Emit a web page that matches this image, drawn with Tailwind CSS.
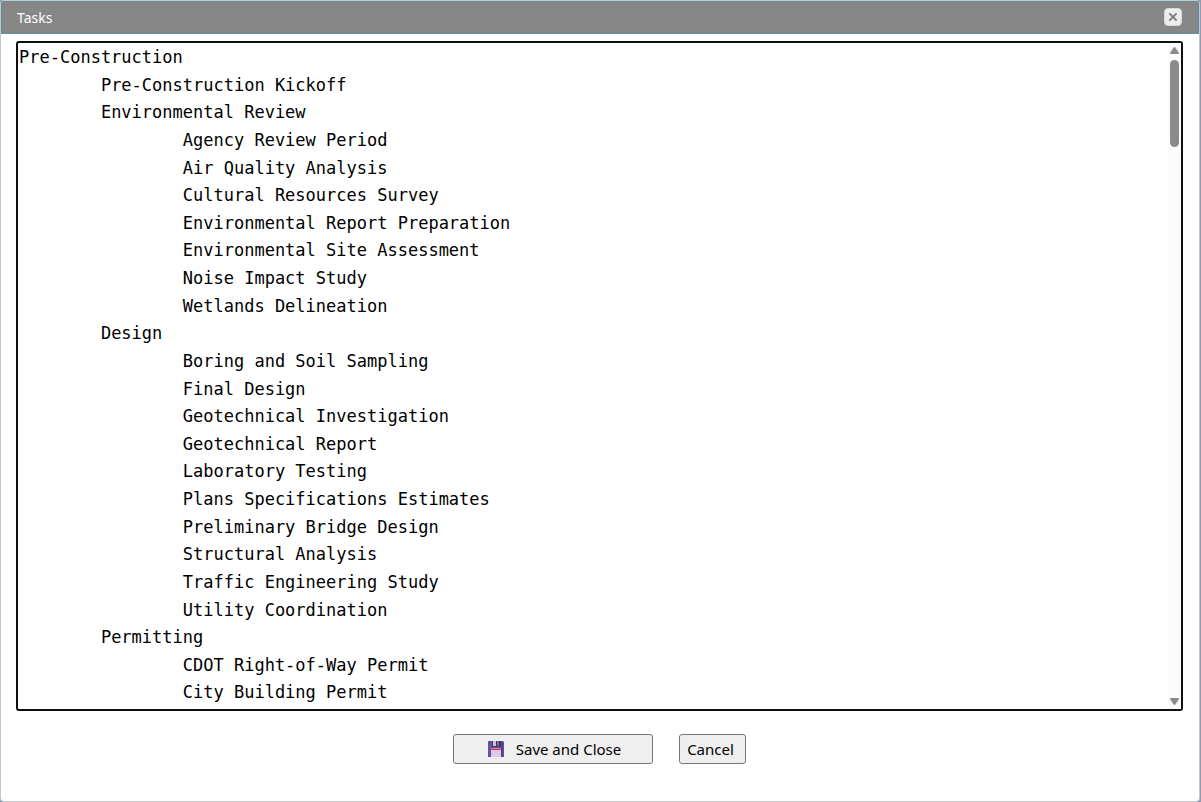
<!DOCTYPE html>
<html lang="en">
<head>
<meta charset="utf-8">
<title>Tasks</title>
<script src="https://cdn.jsdelivr.net/npm/@tailwindcss/browser@4"></script>
</head>
<body class="h-screen overflow-hidden bg-[#8f9bb5] pr-px font-['Noto_Sans','Open_Sans',sans-serif]">
<div role="dialog" aria-labelledby="title" class="flex h-full flex-col overflow-hidden rounded-[4px] border border-[#c8c8c8] bg-white">
  <header class="flex h-[33px] shrink-0 items-center justify-between border border-[#5b8f9c] bg-[#878787] pr-[16px] pb-px pl-[15px]">
    <h1 id="title" class="text-[14px] text-white">Tasks</h1>
    <button type="button" aria-label="Close" class="flex size-[18px] items-center justify-center rounded-[4px] border border-[#d8d8d8] bg-[#ededed]">
      <svg class="size-[10px]" viewBox="0 0 10 10" fill="none" stroke="#7d7d7d" stroke-width="2"><path d="M1.4 1.4 8.6 8.6M8.6 1.4 1.4 8.6"/></svg>
    </button>
  </header>
  <main class="relative mx-[15px] mt-[7px] mr-[16px] min-h-0 flex-1">
    <textarea aria-labelledby="title" spellcheck="false" wrap="off" class="block size-full resize-none overflow-hidden rounded-[3px] border-2 border-[#101010] bg-white px-px pt-px pb-0 font-['DejaVu_Sans_Mono','Liberation_Mono',monospace] text-[17px] leading-[1.625] text-black outline-none [tab-size:8]">
Pre-Construction
&#9;Pre-Construction Kickoff
&#9;Environmental Review
&#9;&#9;Agency Review Period
&#9;&#9;Air Quality Analysis
&#9;&#9;Cultural Resources Survey
&#9;&#9;Environmental Report Preparation
&#9;&#9;Environmental Site Assessment
&#9;&#9;Noise Impact Study
&#9;&#9;Wetlands Delineation
&#9;Design
&#9;&#9;Boring and Soil Sampling
&#9;&#9;Final Design
&#9;&#9;Geotechnical Investigation
&#9;&#9;Geotechnical Report
&#9;&#9;Laboratory Testing
&#9;&#9;Plans Specifications Estimates
&#9;&#9;Preliminary Bridge Design
&#9;&#9;Structural Analysis
&#9;&#9;Traffic Engineering Study
&#9;&#9;Utility Coordination
&#9;Permitting
&#9;&#9;CDOT Right-of-Way Permit
&#9;&#9;City Building Permit</textarea>
    <div aria-hidden="true" class="absolute inset-y-[2px] right-[2px] flex w-[13px] flex-col items-center bg-[#fcfcfc] py-[4px]">
      <svg class="h-[7px] w-[9px]" viewBox="0 0 9 7" fill="#8b8b8b"><path d="M3.7.6Q4.5-.4 5.3.6L8.8 5.6Q9.2 7 8 7H1Q-.2 7 .2 5.6Z"/></svg>
      <div class="mt-[6px] h-[87px] w-[9px] rounded-full bg-[#8b8b8b]"></div>
      <svg class="mt-auto h-[7px] w-[9px]" viewBox="0 0 9 7" fill="#8b8b8b"><path d="M3.7 6.4Q4.5 7.4 5.3 6.4L8.8 1.4Q9.2 0 8 0H1Q-.2 0 .2 1.4Z"/></svg>
    </div>
  </main>
  <footer class="flex shrink-0 justify-center gap-[26px] pt-[23px] pr-[2px] pb-[37px] text-[15px] leading-[20px] text-black">
    <button type="button" class="flex h-[30px] w-[200px] items-center justify-center gap-[12px] rounded-[3px] border border-[#767676] bg-[#efefef] pl-[4px]">
      <svg class="size-[16px]" viewBox="0 0 16 16"><path fill="#6252a0" d="M0 0h15l1 1v15H0z"/><path fill="#50428c" d="M13 1h2v14h-2z"/><path fill="#403759" d="M4 0h9v6H4z"/><path fill="#c9c2d6" d="M5 0h3v5H5z"/><path fill="#756b89" d="M9 0h2v5H9z"/><path fill="#dccbe8" d="M3 7h10v9H3z"/><path fill="#e3265c" d="M3 7.500h10v1.500H3z"/></svg>
      <span>Save and Close</span>
    </button>
    <button type="button" class="h-[30px] w-[67px] rounded-[3px] border border-[#767676] bg-[#efefef] pr-[3px]">Cancel</button>
  </footer>
</div>
</body>
</html>
